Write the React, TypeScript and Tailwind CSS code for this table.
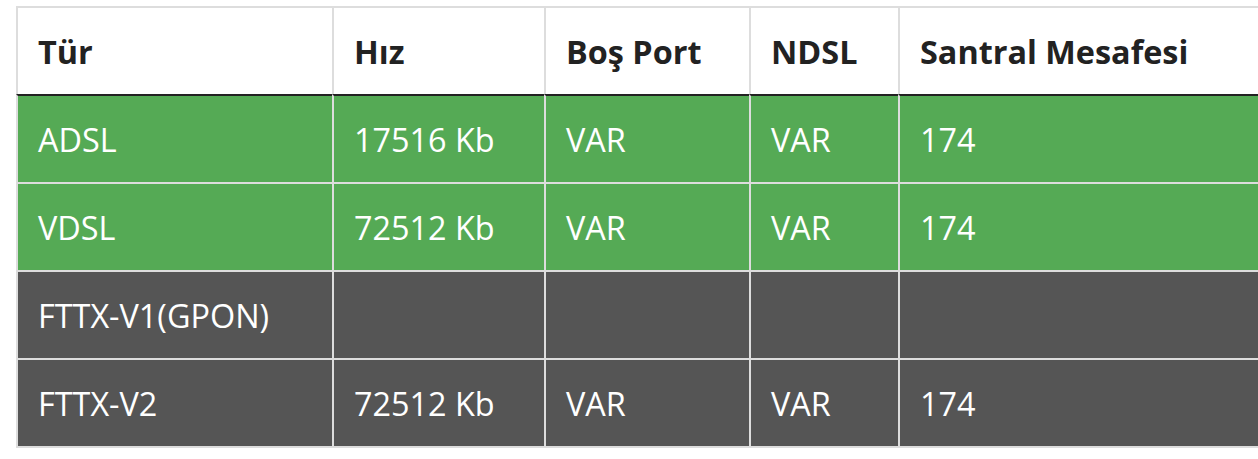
import React from "react";

const headers = ["Tür", "Hız", "Boş Port", "NDSL", "Santral Mesafesi"];
const rows: { bg: string; cells: string[] }[] = [
  { bg: "bg-[#55aa55]", cells: ["ADSL", "17516 Kb", "VAR", "VAR", "174"] },
  { bg: "bg-[#55aa55]", cells: ["VDSL", "72512 Kb", "VAR", "VAR", "174"] },
  { bg: "bg-[#555555]", cells: ["FTTX-V1(GPON)", "", "", "", ""] },
  { bg: "bg-[#555555]", cells: ["FTTX-V2", "72512 Kb", "VAR", "VAR", "174"] },
];

export default function App() {
  return (
    <div
      className="w-[1258px] h-[459px] overflow-hidden bg-white pt-[6px] pl-[16px]"
      style={{ fontFamily: '"Open Sans", "Noto Sans", sans-serif' }}
    >
      <div className="grid w-[1282px] grid-cols-[316px_212px_205px_149px_400px] border-b-2 border-[#dddddd]">
        {headers.map((h) => (
          <div
            key={h}
            className="border-l-2 border-t-2 border-[#dddddd] bg-white px-[20px] py-[20px] text-[32.4px] leading-[46px] font-bold text-[#222222] whitespace-nowrap"
          >
            {h}
          </div>
        ))}
        {rows.map((r, ri) =>
          r.cells.map((c, ci) => (
            <div
              key={`${ri}-${ci}`}
              className={`${r.bg} border-l-2 border-t-2 ${
                ri === 0 ? "border-t-[#222222] border-l-[#dddddd]" : "border-[#dddddd]"
              } px-[20px] py-[20px] text-[32.4px] leading-[46px] text-white whitespace-nowrap h-[88px]`}
            >
              {c}
            </div>
          ))
        )}
      </div>
    </div>
  );
}
